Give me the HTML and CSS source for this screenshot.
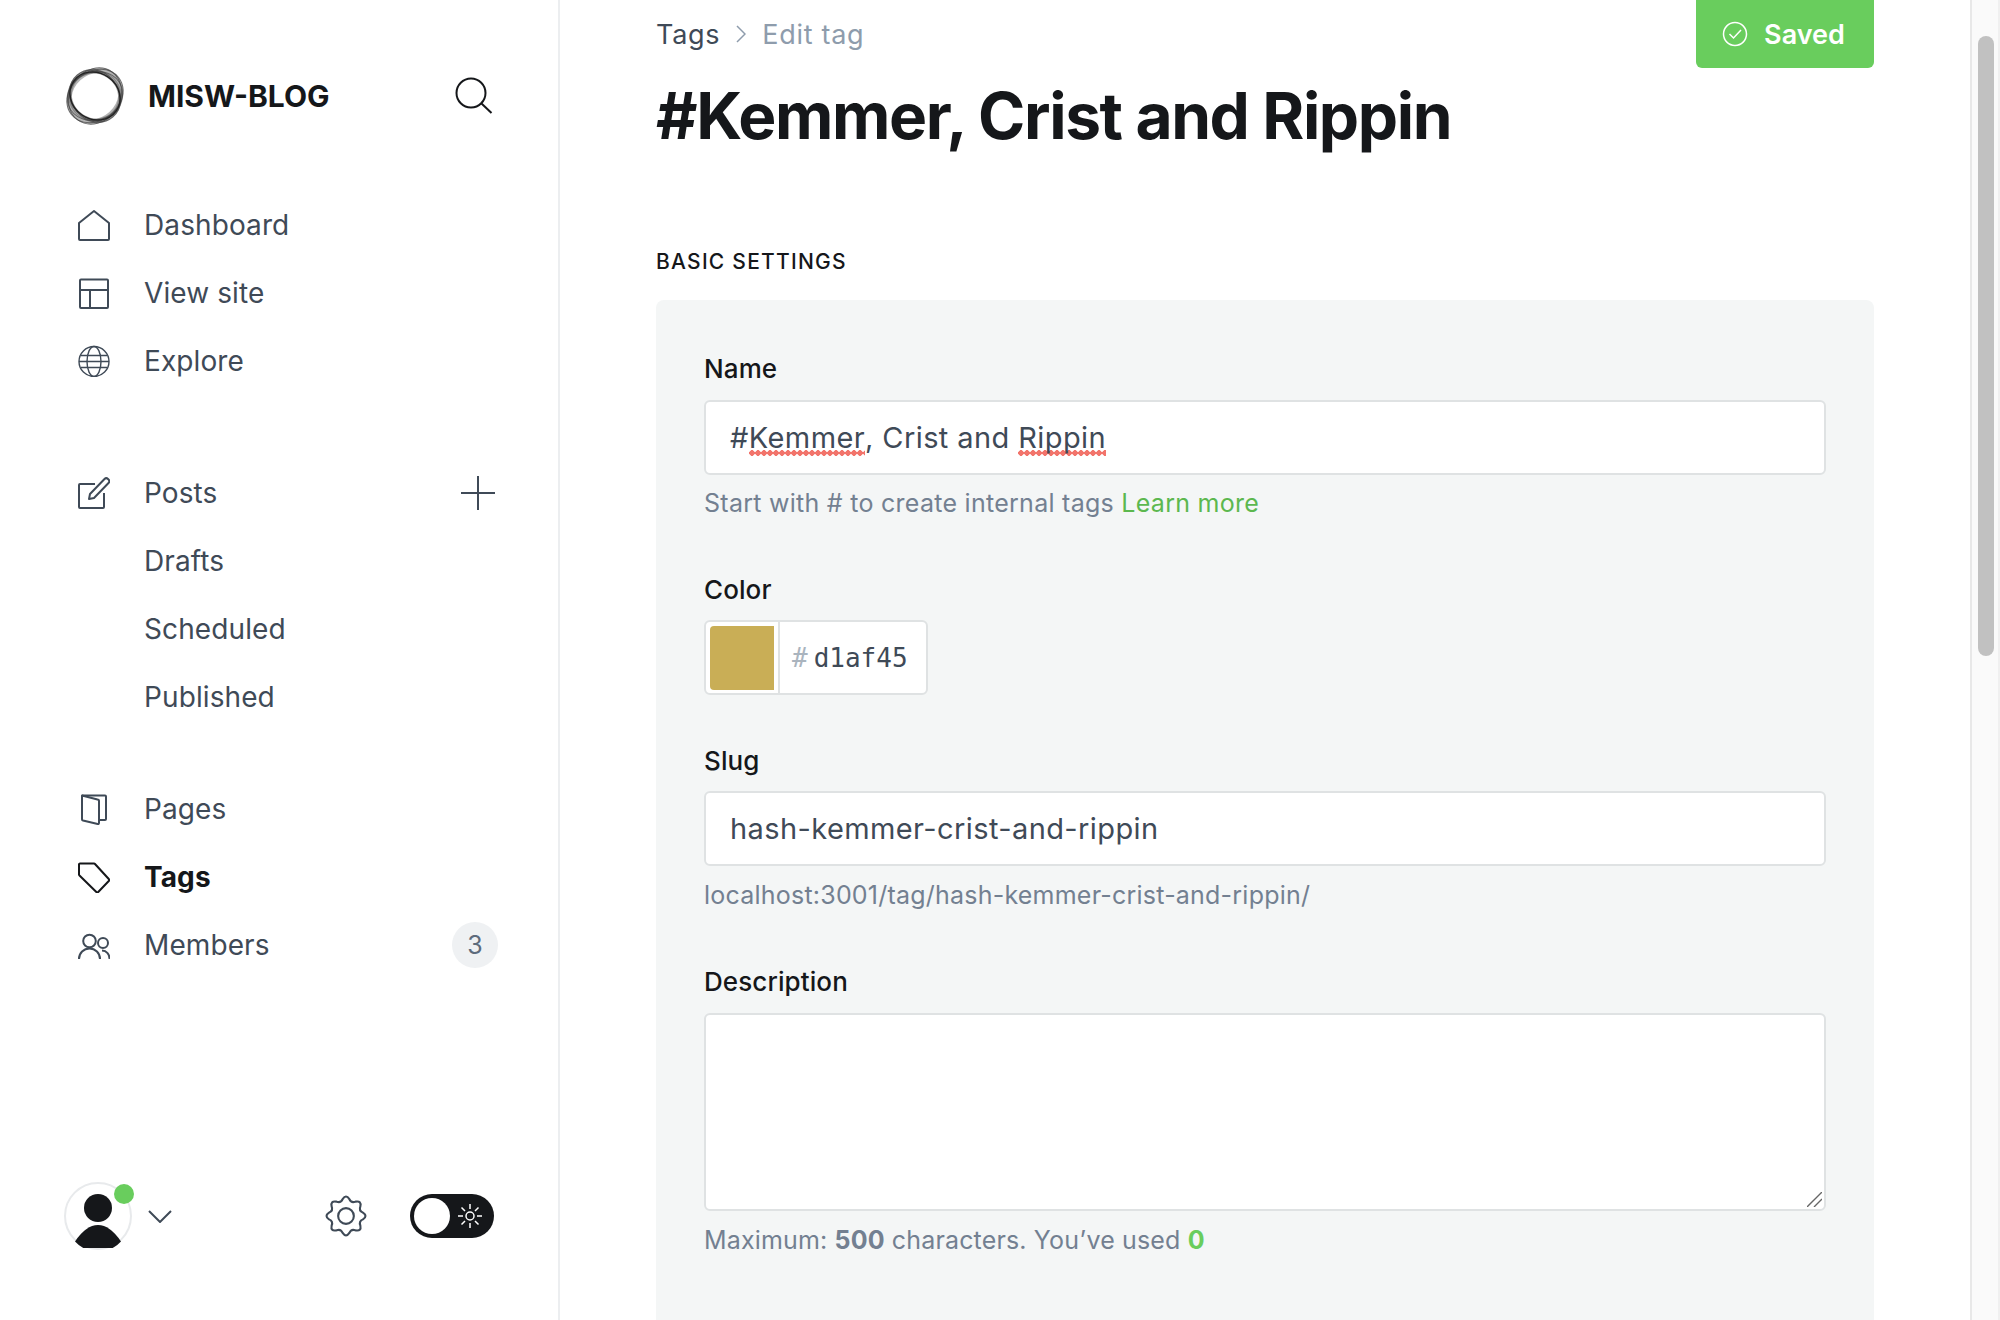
FILE: index.html
```html
<!DOCTYPE html>
<html lang="en">
<head>
  <meta charset="UTF-8" />
  <meta name="viewport" content="width=device-width, initial-scale=1" />
  <title>Edit tag | MISW-BLOG</title>
  <link rel="stylesheet" href="styles.css">
</head>
<body>
<div class="app">

  <!-- Sidebar -->
  <aside class="sidebar">
    <div class="brand">
      <svg class="logo" viewBox="0 0 60 60" fill="none" stroke="#444">
        <ellipse cx="30" cy="30" rx="27.500" ry="24" transform="rotate(-42 30 30)" stroke-width="5" opacity=".4"/>
        <ellipse cx="30" cy="30" rx="25.500" ry="24" transform="rotate(30 30 30)" stroke-width="4" opacity=".4"/>
        <ellipse cx="30" cy="30" rx="30" ry="24.500" transform="rotate(-38 30 30)" stroke-width="1" opacity=".75"/>
        <ellipse cx="30" cy="30" rx="29.500" ry="25" transform="rotate(-55 30 30)" stroke-width="1" opacity=".75"/>
        <ellipse cx="30" cy="30" rx="28" ry="24" transform="rotate(-20 30 30)" stroke-width="1" opacity=".7"/>
        <ellipse cx="30" cy="30" rx="27.500" ry="24" transform="rotate(50 30 30)" stroke-width="1.200" opacity=".8"/>
        <ellipse cx="30" cy="30" rx="26" ry="23" transform="rotate(35 30 30)" stroke-width="1.400" stroke="#222"/>
      </svg>
      <span class="brand-name">MISW-BLOG</span>
      <svg class="search" viewBox="0 0 38 38" fill="none" stroke="#15171a" stroke-width="2">
        <circle cx="16" cy="16" r="14.500"/>
        <path d="M26.500 26.500L36.500 36"/>
      </svg>
    </div>

    <nav class="nav">
      <a class="nav-item">
        <svg class="icon" viewBox="0 0 32 32"><path d="M1 14L16 2l15 12v16a1 1 0 0 1-1 1H2a1 1 0 0 1-1-1z"/></svg>
        Dashboard
      </a>
      <a class="nav-item">
        <svg class="icon" viewBox="0 0 32 32"><rect x="2" y="2.500" width="28" height="28.500" rx="1"/><path d="M2 13h28M12 13v18"/></svg>
        View site
      </a>
      <a class="nav-item">
        <svg class="icon icon-thin" viewBox="0 0 32 32"><circle cx="16" cy="16.500" r="15"/><ellipse cx="16" cy="16.500" rx="7" ry="15"/><path d="M3 10.500h26M1 16.500h30M3 22.500h26"/></svg>
        Explore
      </a>
    </nav>

    <nav class="nav">
      <a class="nav-item">
        <svg class="icon" viewBox="0 0 32 32"><path d="M17 7H2a1 1 0 0 0-1 1v22a1 1 0 0 0 1 1h23a1 1 0 0 0 1-1V16"/><path d="M12 17L26.500 2a2.500 2.500 0 0 1 3.500 0l.5.5a2.500 2.500 0 0 1 0 3.500L16 21l-5 1z"/></svg>
        Posts
        <svg class="plus" viewBox="0 0 34 34"><path d="M0 17h34M17 0v34"/></svg>
      </a>
      <a class="nav-item sub">Drafts</a>
      <a class="nav-item sub">Scheduled</a>
      <a class="nav-item sub">Published</a>
    </nav>

    <nav class="nav nav-last">
      <a class="nav-item">
        <svg class="icon" viewBox="0 0 32 32"><path d="M4 2.500h23a1 1 0 0 1 1 1V26a1 1 0 0 1-1 1h-6"/><path d="M4 2.500l15.500 4a1.500 1.500 0 0 1 1.500 1.500v22a1 1 0 0 1-1.300 1L5 27.500a1.500 1.500 0 0 1-1-1.500z"/></svg>
        Pages
      </a>
      <a class="nav-item active">
        <svg class="icon" viewBox="0 0 32 32"><path d="M2 2.500h14a1.500 1.500 0 0 1 1 .5l14 15.300a1 1 0 0 1 0 1.400L20 31.300a1 1 0 0 1-1.400 0L1.500 14.500a1.500 1.500 0 0 1-.5-1V3.500a1 1 0 0 1 1-1z"/></svg>
        Tags
      </a>
      <a class="nav-item">
        <svg class="icon" viewBox="0 0 32 32"><circle cx="11.500" cy="12" r="6.300"/><circle cx="25" cy="14" r="5"/><path d="M1 30a10.500 10.500 0 0 1 21 0M24 21.500a7.500 7.500 0 0 1 7.300 8.500"/></svg>
        Members
        <span class="badge">3</span>
      </a>
    </nav>

    <div class="side-footer">
      <div class="avatar">
        <svg viewBox="0 0 64 64">
          <circle cx="32" cy="24" r="14"/>
          <path d="M9 57.500Q20 41 32 41t23 16.500A31 31 0 0 1 9 57.500z"/>
        </svg>
        <span class="online"></span>
      </div>
      <svg class="chevron" viewBox="0 0 24 13" fill="none" stroke="#3f4a57" stroke-width="2"><path d="M1 1l11 11L23 1"/></svg>
      <svg class="gear" viewBox="-21 -21 42 42" fill="none" stroke="#3f4a57" stroke-width="2">
        <path d="M-3.220 -16.180Q0 -21 3.220 -16.180Q4.970 -12 9.170 -13.720Q14.850 -14.850 13.720 -9.170Q12 -4.970 16.180 -3.220Q21 0 16.180 3.220Q12 4.970 13.720 9.170Q14.850 14.850 9.170 13.720Q4.970 12 3.220 16.180Q0 21 -3.220 16.180Q-4.970 12 -9.170 13.720Q-14.850 14.850 -13.720 9.170Q-12 4.970 -16.180 3.220Q-21 0 -16.180 -3.220Q-12 -4.970 -13.720 -9.170Q-14.850 -14.850 -9.170 -13.720Q-4.970 -12 -3.220 -16.180Z"/>
        <circle r="7.500"/>
      </svg>
      <div class="theme-toggle">
        <span class="knob"></span>
        <svg class="sun" viewBox="0 0 24 24" fill="none" stroke="#fff" stroke-width="1.500"><circle cx="12" cy="12" r="4"/><path d="M12 0v5M12 19v5M0 12h5M19 12h5M3.500 3.500l3.500 3.500M17 17l3.500 3.500M3.500 20.500L7 17M17 7l3.500-3.500"/></svg>
      </div>
    </div>
  </aside>

  <!-- Main content -->
  <main class="main">
    <div class="topbar">
      <div class="crumbs">
        <a class="crumb-link">Tags</a>
        <svg class="crumb-arrow" viewBox="0 0 10 18" fill="none" stroke="#8e9cac" stroke-width="1.500"><path d="M1 1l8 8-8 8"/></svg>
        <span class="crumb-current">Edit tag</span>
      </div>
      <button class="btn-saved">
        <svg viewBox="0 0 26 26" fill="none" stroke="#fff" stroke-width="1.500"><circle cx="13" cy="13" r="11.500"/><path d="M7.500 13l4 4 7.500-8"/></svg>
        Saved
      </button>
    </div>

    <h1>#Kemmer, Crist and Rippin</h1>

    <h2 class="section-title">Basic settings</h2>

    <section class="panel">
      <div class="field field-name">
        <label>Name</label>
        <div class="input">#<span class="misspelled">Kemmer</span>, Crist and <span class="misspelled">Rippin</span></div>
        <p class="hint">Start with # to create internal tags <a class="link">Learn more</a></p>
      </div>

      <div class="field field-color">
        <label>Color</label>
        <div class="color-input">
          <span class="swatch-wrap"><span class="swatch"></span></span>
          <span class="hex"><i>#</i>d1af45</span>
        </div>
      </div>

      <div class="field field-slug">
        <label>Slug</label>
        <div class="input">hash-kemmer-crist-and-rippin</div>
        <p class="hint">localhost:3001/tag/hash-kemmer-crist-and-rippin/</p>
      </div>

      <div class="field field-desc">
        <label>Description</label>
        <div class="textarea-wrap">
          <textarea class="textarea"></textarea>
          <svg class="grip" viewBox="0 0 15 15" stroke="#666" stroke-width="1.400"><path d="M0 15L15 0M7 15l8-8"/></svg>
        </div>
        <p class="hint hint-count">Maximum: <b>500</b> characters. You’ve used <b class="used">0</b></p>
      </div>
    </section>
  </main>

  <!-- Scrollbar -->
  <div class="scrollbar"><div class="thumb"></div></div>
</div>
</body>
</html>
```
FILE: styles.css
```css
* {
  box-sizing: border-box;
}
html, body {
  margin: 0;
  height: 1320px;
  overflow: hidden;
}
body {
  font-family: Inter, "Liberation Sans", sans-serif;
  color: #15171a;
  background: #fff;
}
.app {
  display: flex;
  height: 1320px;
}

/* sidebar */
.sidebar {
  flex: 0 0 560px;
  display: flex;
  flex-direction: column;
  padding: 66px 60px 70px 64px;
  border-right: 2px solid #eceef0;
}
.brand {
  display: flex;
  align-items: center;
  height: 60px;
  margin-bottom: 65px;
  padding-left: 1px;
}
.logo {
  width: 60px;
  height: 60px;
}
.brand-name {
  margin-left: 23px;
  font-size: 30px;
  font-weight: 700;
}
.search {
  width: 38px;
  height: 38px;
  margin-left: auto;
  margin-right: 5px;
}
.nav {
  margin-bottom: 64px;
}
.nav-last {
  margin-top: -20px;
  margin-bottom: 0;
}
.nav-item {
  display: flex;
  align-items: center;
  height: 68px;
  padding-left: 14px;
  font-size: 28px;
  letter-spacing: .1px;
  color: #3f4a57;
}
.nav-item.sub {
  padding-left: 80px;
}
.nav-item.active {
  font-weight: 700;
  color: #15171a;
}
.icon {
  flex: none;
  width: 32px;
  height: 32px;
  margin-right: 34px;
  fill: none;
  stroke: currentColor;
  stroke-width: 2;
  stroke-linejoin: round;
}
.icon-thin {
  stroke-width: 1.400;
}
.plus {
  width: 34px;
  height: 34px;
  margin-left: auto;
  margin-right: 3px;
  fill: none;
  stroke: #3f4a57;
  stroke-width: 2;
}
.badge {
  display: flex;
  align-items: center;
  justify-content: center;
  width: 46px;
  height: 46px;
  margin-left: auto;
  border-radius: 50%;
  background: #eff1f3;
  color: #5d6b7c;
  font-size: 25px;
}
.side-footer {
  display: flex;
  align-items: center;
  margin-top: auto;
}
.avatar {
  position: relative;
  width: 68px;
  height: 68px;
  border: 2px solid #e8eaec;
  border-radius: 50%;
}
.avatar svg {
  display: block;
  fill: #15171a;
}
.online {
  position: absolute;
  top: 0;
  right: -4px;
  width: 20px;
  height: 20px;
  border-radius: 50%;
  background: #69cd5d;
}
.chevron {
  width: 24px;
  height: 13px;
  margin-left: 16px;
}
.gear {
  width: 44px;
  height: 44px;
  margin-left: auto;
}
.theme-toggle {
  display: flex;
  align-items: center;
  width: 84px;
  height: 44px;
  margin-left: 42px;
  margin-right: 4px;
  padding: 0 4px;
  border-radius: 22px;
  background: #15171a;
}
.knob {
  width: 36px;
  height: 36px;
  border-radius: 50%;
  background: #fff;
}
.sun {
  width: 24px;
  height: 24px;
  margin-left: 8px;
}

/* main */
.main {
  flex: 1;
  min-width: 0;
  padding: 0 96px;
  overflow: hidden;
}
.topbar {
  display: flex;
  align-items: flex-start;
  justify-content: space-between;
  height: 68px;
}
.crumbs {
  display: flex;
  align-items: center;
  height: 68px;
  font-size: 27px;
  letter-spacing: .7px;
}
.crumb-link {
  color: #3f4a57;
}
.crumb-arrow {
  width: 10px;
  height: 18px;
  margin: 0 16px;
}
.crumb-current {
  color: #8e9cac;
}
.btn-saved {
  display: flex;
  align-items: center;
  justify-content: center;
  width: 178px;
  height: 68px;
  padding: 0 8px 0 5px;
  border: none;
  border-radius: 0 0 6px 6px;
  background: #69cd5d;
  color: #fff;
  font-family: inherit;
  font-size: 27px;
  font-weight: 600;
}
.btn-saved svg {
  width: 26px;
  height: 26px;
  margin-right: 16px;
}
h1 {
  margin: 10px 0 0;
  font-size: 64px;
  line-height: 76px;
  font-weight: 700;
  letter-spacing: -1.400px;
}
.section-title {
  margin: 91px 0 0;
  font-size: 21px;
  line-height: 34px;
  font-weight: 500;
  letter-spacing: 1.250px;
  text-transform: uppercase;
}
.panel {
  margin-top: 21px;
  height: 1100px;
  padding: 51px 48px 0;
  border-radius: 8px;
  background: #f4f6f6;
}
.field label {
  display: block;
  margin-bottom: 13px;
  font-size: 26px;
  line-height: 36px;
  font-weight: 500;
  letter-spacing: .1px;
}
.field-color {
  margin-top: 51px;
}
.field-color label,
.field-slug label {
  margin-bottom: 12px;
}
.field-slug {
  margin-top: 48px;
}
.field-desc {
  margin-top: 51px;
}
.input {
  display: flex;
  align-items: center;
  height: 75px;
  padding: 0 24px;
  border: 2px solid #dfe2e3;
  border-radius: 6px;
  background: #fff;
  font-size: 29px;
  letter-spacing: .4px;
  color: #3f4a57;
  white-space: pre;
}
.misspelled {
  padding-bottom: 1px;
  background: radial-gradient(circle at center, #f2746b 2.600px, transparent 3px) left bottom / 6px 6px repeat-x;
}
.hint {
  margin: 11px 0 0;
  font-size: 25px;
  line-height: 36px;
  letter-spacing: .22px;
  color: #738091;
}
.field-name .hint {
  margin-top: 10px;
  letter-spacing: .27px;
}
.hint-count {
  letter-spacing: .15px;
}
.hint b {
  font-weight: 700;
}
.link {
  color: #5cb84f;
}
.used {
  color: #69cd5d;
}
.color-input {
  display: flex;
  width: 224px;
  height: 75px;
  border: 2px solid #dfe2e3;
  border-radius: 6px;
  background: #fff;
}
.swatch-wrap {
  flex: 0 0 74px;
  padding: 4px;
  border-right: 2px solid #dfe2e3;
}
.swatch {
  display: block;
  width: 64px;
  height: 64px;
  border-radius: 4px 0 0 4px;
  background: #c9ae56;
}
.hex {
  display: flex;
  align-items: center;
  padding-left: 12px;
  font-family: "DejaVu Sans Mono", monospace;
  font-size: 26px;
  color: #3f4a57;
}
.hex i {
  margin-right: 6px;
  font-style: normal;
  color: #aab4be;
}
.textarea-wrap {
  position: relative;
  height: 198px;
}
.textarea {
  display: block;
  width: 100%;
  height: 198px;
  border: 2px solid #dfe2e3;
  border-radius: 6px;
  background: #fff;
  resize: none;
}
.grip {
  position: absolute;
  right: 4px;
  bottom: 4px;
  width: 15px;
  height: 15px;
}

/* scrollbar */
.scrollbar {
  flex: 0 0 30px;
  padding: 36px 4px 0 6px;
  border-left: 2px solid #e8e8e8;
  border-right: 2px solid #f0f0f0;
  background: #fafafa;
}
.thumb {
  width: 16px;
  height: 620px;
  border-radius: 8px;
  background: #c1c1c1;
}
```
